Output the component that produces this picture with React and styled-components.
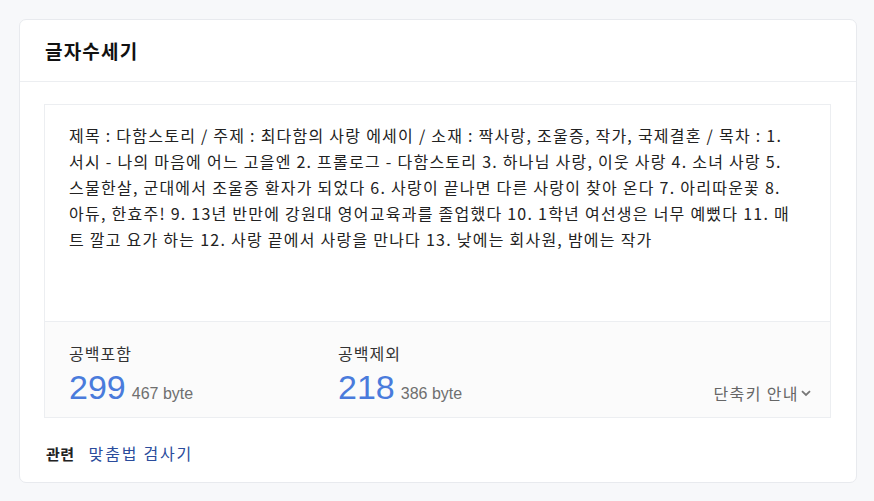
import React from "react";
import styled, { createGlobalStyle } from "styled-components";

const Global = createGlobalStyle`
  html, body { margin: 0; padding: 0; background: #f7f8fa; }
  body { font-family: "Noto Sans CJK KR", "Noto Sans", sans-serif; color: #222; }
  * { box-sizing: border-box; }
`;

const Page = styled.div`
  padding: 19px 17px 19px 19px;
`;

const Card = styled.section`
  background: #fff;
  border: 1px solid #e8eaee;
  border-radius: 7px;
  display: flex;
  flex-direction: column;
`;

const Header = styled.header`
  height: 62px;
  display: flex;
  align-items: center;
  padding: 0 25px;
  border-bottom: 1px solid #eceef1;
`;

const Title = styled.h1`
  margin: 0;
  font-size: 19px;
  letter-spacing: 1.2px;
  font-weight: 700;
  color: #111;
`;

const Body = styled.div`
  padding: 22px 25px 0 24px;
`;

const Counter = styled.div`
  border: 1px solid #eceef1;
  display: flex;
  flex-direction: column;
`;

const TextArea = styled.textarea`
  display: block;
  width: 100%;
  height: 216px;
  border: none;
  outline: none;
  resize: none;
  overflow: hidden;
  padding: 17px 20px 17px 24px;
  font-family: "Noto Sans CJK KR", "Noto Sans", sans-serif;
  font-size: 16px;
  letter-spacing: 1.25px;
  line-height: 26px;
  color: #222;
  background: #fff;
`;

const Stats = styled.div`
  border-top: 1px solid #eceef1;
  background: #fbfbfb;
  height: 96px;
  padding: 20px 18px 0 24px;
  display: flex;
  align-items: flex-start;
`;

const Stat = styled.div`
  width: 269px;
  display: flex;
  flex-direction: column;
`;

const Label = styled.div`
  font-size: 16px;
  letter-spacing: 1px;
  line-height: 22px;
  color: #333;
`;

const Value = styled.div`
  display: flex;
  align-items: baseline;
  gap: 6px;
  margin-top: 3px;
`;

const Num = styled.span`
  font-family: "Liberation Sans", Arial, sans-serif;
  font-size: 34px;
  line-height: 40px;
  color: #4a7bdc;
`;

const Bytes = styled.span`
  font-family: "Liberation Sans", Arial, sans-serif;
  font-size: 16px;
  color: #6f6f6f;
`;

const Shortcut = styled.button`
  margin-left: auto;
  align-self: flex-end;
  margin-bottom: 12px;
  background: none;
  border: none;
  padding: 0;
  display: flex;
  align-items: center;
  gap: 1px;
  font-family: "Noto Sans CJK KR", "Noto Sans", sans-serif;
  font-size: 16px;
  letter-spacing: 1.4px;
  color: #666;
  cursor: pointer;
`;

const Related = styled.div`
  height: 64px;
  display: flex;
  align-items: center;
  gap: 14px;
  padding: 6px 0 0 26px;
  font-size: 15px;
`;

const RelLabel = styled.span`
  font-weight: 700;
  color: #222;
  letter-spacing: 0.5px;
`;

const RelLink = styled.a`
  color: #2b4c9c;
  font-size: 16px;
  letter-spacing: 1.8px;
  text-decoration: none;
`;

const text = [
  "제목 : 다함스토리 / 주제 : 최다함의 사랑 에세이 / 소재 : 짝사랑, 조울증, 작가, 국제결혼 / 목차 : 1.",
  "서시 - 나의 마음에 어느 고을엔 2. 프롤로그 - 다함스토리 3. 하나님 사랑, 이웃 사랑 4. 소녀 사랑 5.",
  "스물한살, 군대에서 조울증 환자가 되었다 6. 사랑이 끝나면 다른 사랑이 찾아 온다 7. 아리따운꽃 8.",
  "아듀, 한효주! 9. 13년 반만에 강원대 영어교육과를 졸업했다 10. 1학년 여선생은 너무 예뻤다 11. 매",
  "트 깔고 요가 하는 12. 사랑 끝에서 사랑을 만나다 13. 낮에는 회사원, 밤에는 작가",
].join("\n");

export default function App() {
  return (
    <Page>
      <Global />
      <Card>
        <Header>
          <Title>글자수세기</Title>
        </Header>
        <Body>
          <Counter>
            <TextArea readOnly value={text} />
            <Stats>
              <Stat>
                <Label>공백포함</Label>
                <Value>
                  <Num>299</Num>
                  <Bytes>467 byte</Bytes>
                </Value>
              </Stat>
              <Stat>
                <Label>공백제외</Label>
                <Value>
                  <Num>218</Num>
                  <Bytes>386 byte</Bytes>
                </Value>
              </Stat>
              <Shortcut>
                단축키 안내
                <svg width="12" height="12" viewBox="0 0 12 12" fill="none">
                  <path d="M2 4.2L6 8l4-3.8" stroke="#777" strokeWidth="1.8" />
                </svg>
              </Shortcut>
            </Stats>
          </Counter>
        </Body>
        <Related>
          <RelLabel>관련</RelLabel>
          <RelLink href="#">맞춤법 검사기</RelLink>
        </Related>
      </Card>
    </Page>
  );
}
